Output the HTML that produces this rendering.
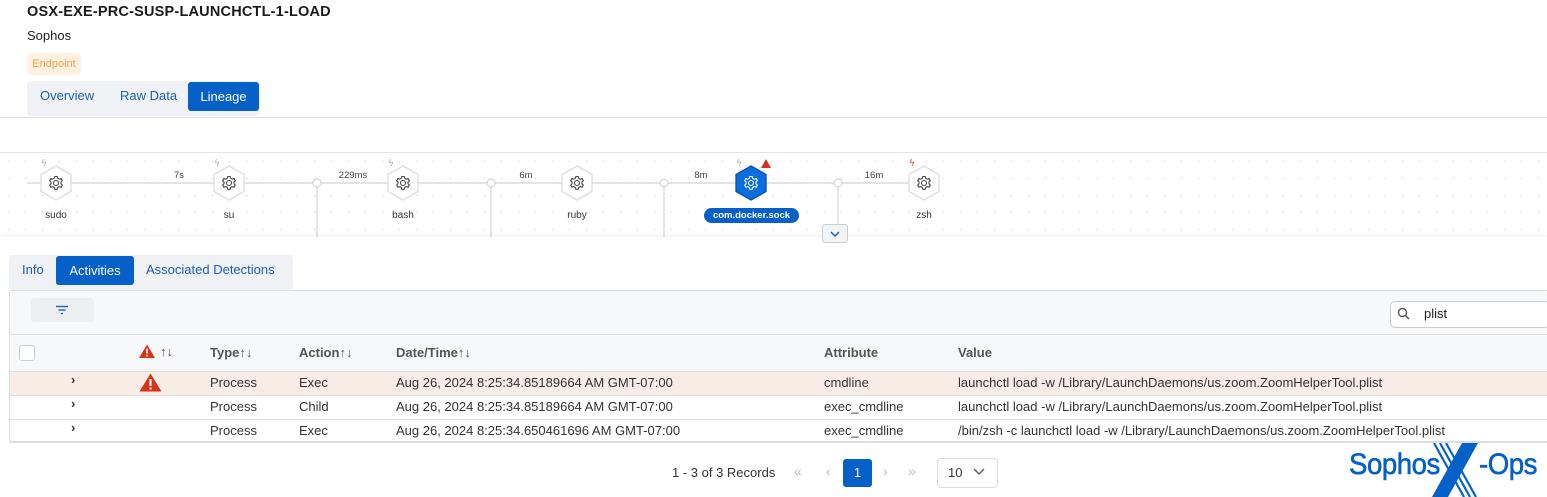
<!DOCTYPE html>
<html><head><meta charset="utf-8"><style>
*{margin:0;padding:0;box-sizing:border-box}
body{width:1547px;height:497px;overflow:hidden;background:#fff;font-family:"Liberation Sans",sans-serif;color:#333;position:relative;font-size:13px}
.a{position:absolute;white-space:nowrap}
.lbl{font-size:10px;color:#333;transform:translateX(-50%)}
.hd{font-weight:bold;color:#555;font-size:13px}
.cell{font-size:13px;color:#333}
</style></head><body>
<div class="a" style="left:27px;top:4px;font-weight:bold;font-size:14.5px;color:#1a1a1a;letter-spacing:0.2px">OSX-EXE-PRC-SUSP-LAUNCHCTL-1-LOAD</div>
<div class="a" style="left:27px;top:28px;font-size:13px;color:#222">Sophos</div>
<div class="a" style="left:27px;top:53px;width:54px;height:22px;background:#fff1e2;border-radius:4px;color:#f5a04a;font-size:11px;line-height:22px;text-align:center">Endpoint</div>
<div class="a" style="left:27px;top:81px;width:233px;height:35px;background:#f0f1f4;border-radius:4px"></div>
<div class="a" style="left:40px;top:88px;color:#1f5fb4;font-size:13px">Overview</div>
<div class="a" style="left:120px;top:88px;color:#1f5fb4;font-size:13px">Raw Data</div>
<div class="a" style="left:188px;top:82px;width:71px;height:29px;background:#0561c8;border-radius:3px;color:#fff;font-size:13px;line-height:29px;text-align:center">Lineage</div>
<div class="a" style="left:0;top:117px;width:1547px;height:1px;background:#ddd"></div>
<div class="a" style="left:0;top:152px;width:1547px;height:1px;background:#e3e3e3"></div>
<div class="a" style="left:0;top:153px;width:1547px;height:84px;background-image:radial-gradient(#e8e8e8 1px,transparent 1.2px);background-size:17px 17px"></div>
<svg class="a" style="left:0;top:153px" width="1547" height="85">
<g stroke="#d4d4d4" stroke-width="1.2" fill="none">
<line x1="27" y1="30" x2="910" y2="30"/>
<line x1="317" y1="30" x2="317" y2="85"/><line x1="491" y1="30" x2="491" y2="85"/>
<line x1="664" y1="30" x2="664" y2="85"/><line x1="838" y1="30" x2="838" y2="72"/>
</g>
<g fill="#fff" stroke="#ccc"><circle cx="317" cy="30" r="4"/><circle cx="491" cy="30" r="4"/><circle cx="664" cy="30" r="4"/><circle cx="838" cy="30" r="4"/></g>
<g font-family="Liberation Sans" font-size="9.5" fill="#444" text-anchor="middle">
<text x="179" y="25">7s</text><text x="353" y="25">229ms</text><text x="526" y="25">6m</text><text x="701" y="25">8m</text><text x="874" y="25">16m</text></g>
<defs><g id="hx"><polygon points="0,-17 15,-8.5 15,8.5 0,17 -15,8.5 -15,-8.5"/></g>
<g id="gear"><circle r="2.5" fill="none"/><path d="M-1.2,-6.5h2.4l.5,1.8 1.6,.9 1.8-.6 1.2,2.1-1.3,1.3v1.8l1.3,1.3-1.2,2.1-1.8-.6-1.6,.9-.5,1.8h-2.4l-.5-1.8-1.6-.9-1.8,.6-1.2-2.1 1.3-1.3v-1.8l-1.3-1.3 1.2-2.1 1.8,.6 1.6-.9z" fill="none"/></g></defs>
<g fill="#fff" stroke="#ddd" stroke-width="1.3">
<use href="#hx" x="56" y="30"/><use href="#hx" x="229" y="30"/><use href="#hx" x="403" y="30"/><use href="#hx" x="577" y="30"/><use href="#hx" x="924" y="30"/></g>
<use href="#hx" x="751" y="30" fill="#0a6ee0" stroke="#0550b0" stroke-width="1.3"/>
<g stroke="#444" stroke-width="1.1">
<use href="#gear" x="56" y="30"/><use href="#gear" x="229" y="30"/><use href="#gear" x="403" y="30"/><use href="#gear" x="577" y="30"/><use href="#gear" x="924" y="30"/></g>
<use href="#gear" x="751" y="30" stroke="#fff" stroke-width="1.1"/>
<g fill="#aaa" font-size="9" font-family="DejaVu Sans"><text x="41" y="13">ϟ</text><text x="214" y="13">ϟ</text><text x="388" y="13">ϟ</text><text x="736" y="13">ϟ</text></g>
<text x="909" y="13" fill="#e03a1e" font-size="9" font-family="DejaVu Sans">ϟ</text>
<polygon points="766,6 771,15 761,15" fill="#d6341a"/>
</svg>
<div class="a lbl" style="left:56px;top:210px">sudo</div>
<div class="a lbl" style="left:229px;top:210px">su</div>
<div class="a lbl" style="left:403px;top:210px">bash</div>
<div class="a lbl" style="left:577px;top:210px">ruby</div>
<div class="a lbl" style="left:924px;top:210px">zsh</div>
<div class="a" style="left:704px;top:208px;width:95px;height:15px;background:#0561c8;border-radius:8px;color:#fff;font-weight:bold;font-size:9.5px;line-height:15px;text-align:center">com.docker.sock</div>
<div class="a" style="left:0;top:237px;width:1547px;height:260px;background:#fff;box-shadow:0 -3px 4px rgba(0,0,0,0.04)"></div>
<div class="a" style="left:822px;top:224px;width:26px;height:19px;background:#f2f3f5;border:1px solid #ccc;border-radius:3px"></div>
<svg class="a" style="left:830px;top:231px" width="10" height="6"><polyline points="1,1 5,5 9,1" fill="none" stroke="#1f5fb4" stroke-width="1.5"/></svg>
<div class="a" style="left:9px;top:255px;width:284px;height:35px;background:#f0f1f4;border-radius:4px"></div>
<div class="a" style="left:22px;top:262px;color:#1f5fb4">Info</div>
<div class="a" style="left:56px;top:256px;width:78px;height:29px;background:#0561c8;border-radius:3px;color:#fff;text-align:center;line-height:29px">Activities</div>
<div class="a" style="left:146px;top:262px;color:#1f5fb4">Associated Detections</div>
<div class="a" style="left:9px;top:290px;width:1540px;height:153px;border:1px solid #ddd;border-radius:3px;background:#fff"></div>
<div class="a" style="left:10px;top:291px;width:1537px;height:80px;background:#f7f8fa"></div>
<div class="a" style="left:31px;top:298px;width:63px;height:24px;background:#edeef1;border-radius:3px"></div>
<svg class="a" style="left:55px;top:305px" width="14" height="10"><g stroke="#1f5fb4" stroke-width="1.4"><line x1="1" y1="1.5" x2="13" y2="1.5"/><line x1="3.5" y1="5" x2="10.5" y2="5"/><line x1="6" y1="8.5" x2="8" y2="8.5"/></g></svg>
<div class="a" style="left:1390px;top:301px;width:160px;height:27px;background:#fff;border:1px solid #ccc;border-radius:5px"></div>
<svg class="a" style="left:1397px;top:307px" width="14" height="14"><circle cx="5.5" cy="5.5" r="4" fill="none" stroke="#555" stroke-width="1.4"/><line x1="8.5" y1="8.5" x2="12" y2="12" stroke="#555" stroke-width="1.5"/></svg>
<div class="a" style="left:1424px;top:306px;font-size:13px;color:#222">plist</div>
<div class="a" style="left:10px;top:334px;width:1537px;height:1px;background:#ddd"></div>
<div class="a" style="left:19px;top:345px;width:16px;height:16px;border:1px solid #ccc;border-radius:3px;background:#fff"></div>
<svg class="a" style="left:139px;top:344px" width="18" height="15"><polygon points="8,0.5 16,14 0,14" fill="#d6341a"/><rect x="7.2" y="4.5" width="1.6" height="5" fill="#fff"/><rect x="7.2" y="10.8" width="1.6" height="1.6" fill="#fff"/></svg>
<div class="a hd" style="left:160px;top:344px;font-weight:normal">&#8593;&#8595;</div>
<div class="a hd" style="left:210px;top:345px">Type&#8593;&#8595;</div>
<div class="a hd" style="left:299px;top:345px">Action&#8593;&#8595;</div>
<div class="a hd" style="left:396px;top:345px">Date/Time&#8593;&#8595;</div>
<div class="a hd" style="left:824px;top:345px">Attribute</div>
<div class="a hd" style="left:958px;top:345px">Value</div>
<div class="a" style="left:10px;top:371px;width:1537px;height:24px;background:#f9ebe6;border-top:1px solid #ddd"></div>
<div class="a" style="left:10px;top:395px;width:1537px;height:1px;background:#ddd"></div>
<div class="a" style="left:10px;top:419px;width:1537px;height:1px;background:#ddd"></div>
<div class="a" style="left:10px;top:441px;width:1537px;height:2px;background:#ddd"></div>
<svg class="a" style="left:139px;top:373px" width="23" height="19"><polygon points="11.5,0.5 22.5,18.5 0.5,18.5" fill="#d6341a"/><rect x="10.5" y="6" width="2" height="7" fill="#fff"/><rect x="10.5" y="14.5" width="2" height="2" fill="#fff"/></svg>
<div class="a cell" style="left:71px;top:372px;font-weight:bold">&#8250;</div>
<div class="a cell" style="left:71px;top:396px;font-weight:bold">&#8250;</div>
<div class="a cell" style="left:71px;top:420px;font-weight:bold">&#8250;</div>
<div class="a cell" style="left:210px;top:375px">Process</div><div class="a cell" style="left:299px;top:375px">Exec</div><div class="a cell" style="left:396px;top:375px">Aug 26, 2024 8:25:34.85189664 AM GMT-07:00</div><div class="a cell" style="left:824px;top:375px">cmdline</div><div class="a cell" style="left:958px;top:375px">launchctl load -w /Library/LaunchDaemons/us.zoom.ZoomHelperTool.plist</div>
<div class="a cell" style="left:210px;top:399px">Process</div><div class="a cell" style="left:299px;top:399px">Child</div><div class="a cell" style="left:396px;top:399px">Aug 26, 2024 8:25:34.85189664 AM GMT-07:00</div><div class="a cell" style="left:824px;top:399px">exec_cmdline</div><div class="a cell" style="left:958px;top:399px">launchctl load -w /Library/LaunchDaemons/us.zoom.ZoomHelperTool.plist</div>
<div class="a cell" style="left:210px;top:423px">Process</div><div class="a cell" style="left:299px;top:423px">Exec</div><div class="a cell" style="left:396px;top:423px">Aug 26, 2024 8:25:34.650461696 AM GMT-07:00</div><div class="a cell" style="left:824px;top:423px">exec_cmdline</div><div class="a cell" style="left:958px;top:423px">/bin/zsh -c launchctl load -w /Library/LaunchDaemons/us.zoom.ZoomHelperTool.plist</div>
<div class="a" style="left:672px;top:465px;font-size:13px;color:#333">1 - 3 of 3 Records</div>
<div class="a" style="left:794px;top:463px;color:#bbb;font-size:14px">&#171;</div>
<div class="a" style="left:826px;top:463px;color:#bbb;font-size:14px">&#8249;</div>
<div class="a" style="left:843px;top:459px;width:29px;height:28px;background:#0561c8;border-radius:3px;color:#fff;text-align:center;line-height:28px;font-size:13px">1</div>
<div class="a" style="left:883px;top:463px;color:#bbb;font-size:14px">&#8250;</div>
<div class="a" style="left:908px;top:463px;color:#bbb;font-size:14px">&#187;</div>
<div class="a" style="left:937px;top:458px;width:61px;height:30px;border:1px solid #ddd;border-radius:4px"></div>
<div class="a" style="left:948px;top:465px;font-size:13px">10</div>
<svg class="a" style="left:973px;top:468px" width="12" height="8"><polyline points="1,1 6,6 11,1" fill="none" stroke="#555" stroke-width="1.3"/></svg>
<div class="a" style="left:1349px;top:448px;font-size:30px;color:#0561c8;letter-spacing:-0.5px;-webkit-text-stroke:0.6px #0561c8;transform:scaleX(0.92);transform-origin:left">Sophos</div>
<svg class="a" style="left:1428px;top:443px" width="60" height="54">
<polygon points="34,0 50,0 20,54 4,54" fill="#0561c8"/>
<g stroke="#0561c8" stroke-width="2.2"><line x1="6" y1="0" x2="36" y2="54"/><line x1="12" y1="0" x2="42" y2="54"/><line x1="18" y1="0" x2="48" y2="54"/></g>
</svg>
<div class="a" style="left:1479px;top:448px;font-size:30px;color:#0561c8;letter-spacing:-0.5px;-webkit-text-stroke:0.6px #0561c8;transform:scaleX(0.92);transform-origin:left">-Ops</div>
</body></html>
